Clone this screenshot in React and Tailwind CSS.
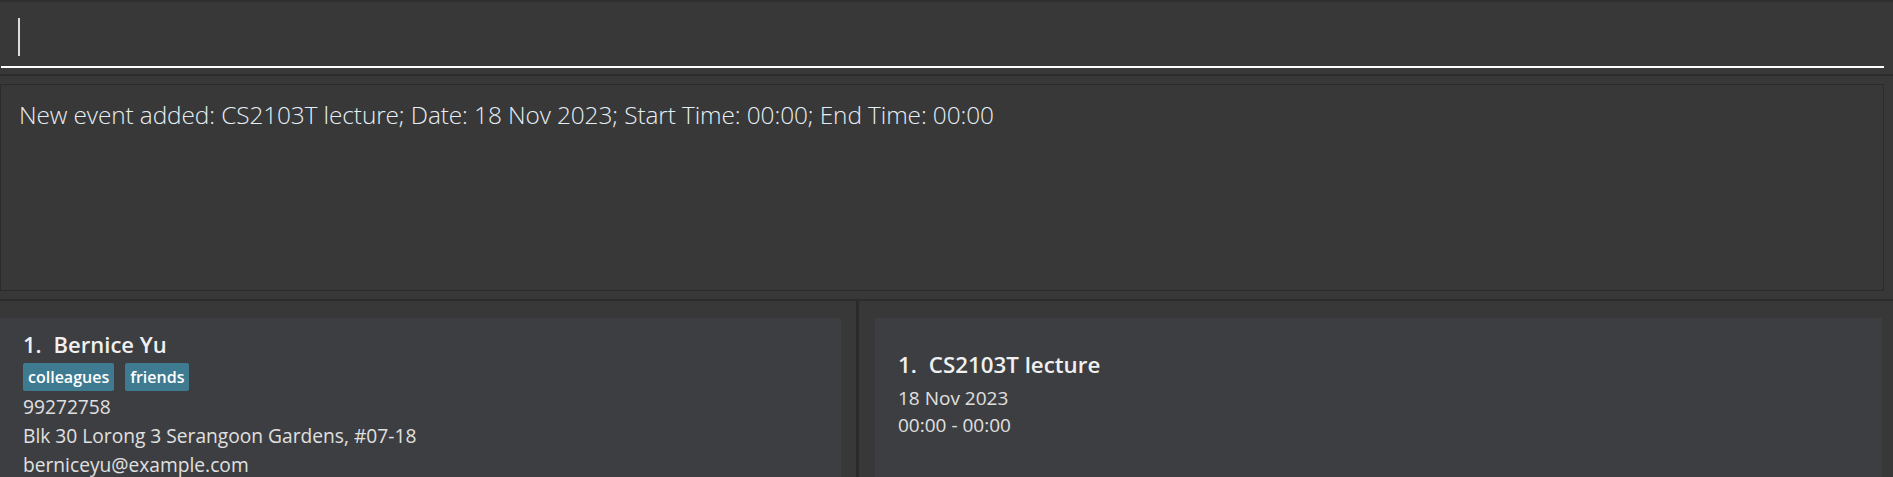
const font = { fontFamily: '"Open Sans", "Noto Sans", sans-serif' };

const Tag = ({ label }) => (
    <span className="bg-[#3e7b91] text-white font-semibold text-[16px] leading-none px-[5px] py-[6px] rounded-[2px]">
        {label}
    </span>
);

const App = () => {
    return (
        <div className="w-[1893px] h-[477px] bg-[#383838] text-[#e8e8e8] overflow-hidden flex flex-col" style={font}>
            {/* command box */}
            <div className="h-[76px] border-t-2 border-[#2f2f2f] border-b-2 border-b-[#2c2c2c] pt-[16px] px-[1px]">
                <div className="h-[50px] w-[1883px] border-b-2 border-white flex items-start">
                    <div className="ml-[17px] w-[2px] h-[38px] bg-[#dcdcdc]"></div>
                </div>
            </div>

            {/* result display */}
            <div className="pt-[8px] pb-[8px] pl-0 pr-[9px] border-b-2 border-[#2c2c2c]">
                <div className="h-[207px] border border-[#2b2b2b] px-[18px] pt-[12px]">
                    <p className="text-[24.4px] font-light text-[#e6eef5] tracking-[-0.1px]">
                        New event added: CS2103T lecture; Date: 18 Nov 2023; Start Time: 00:00; End Time: 00:00
                    </p>
                </div>
            </div>

            {/* lists */}
            <div className="flex flex-1 min-h-0">
                <div className="w-[856px] pt-[17px] pr-[15px] flex">
                    <div className="flex-1 bg-[#3d3e41] pl-[23px] pt-[11px]">
                        <div className="text-[22px] font-semibold text-[#f0f0f0] leading-[30px]">
                            <span className="mr-[12px]">1.</span>Bernice Yu
                        </div>
                        <div className="flex gap-[11px] mt-[4px] mb-[1px]">
                            <Tag label="colleagues" />
                            <Tag label="friends" />
                        </div>
                        <div className="text-[19.2px] leading-[29px] text-[#e0e0e0]">
                            <div>99272758</div>
                            <div>Blk 30 Lorong 3 Serangoon Gardens, #07-18</div>
                            <div>berniceyu@example.com</div>
                        </div>
                    </div>
                </div>
                <div className="w-[3px] bg-[#2a2a2a]"></div>
                <div className="flex-1 pt-[17px] pl-[16px] pr-[11px] flex">
                    <div className="flex-1 bg-[#3d3e41] pl-[23px] pt-[31px]">
                        <div className="text-[22.3px] font-semibold text-[#f0f0f0] leading-[32px]">
                            <span className="mr-[12px]">1.</span>CS2103T lecture
                        </div>
                        <div className="text-[19px] leading-[27px] text-[#e0e0e0] mt-[4px]">
                            <div>18 Nov 2023</div>
                            <div>00:00 - 00:00</div>
                        </div>
                    </div>
                </div>
            </div>
        </div>
    );
};

export default App;
